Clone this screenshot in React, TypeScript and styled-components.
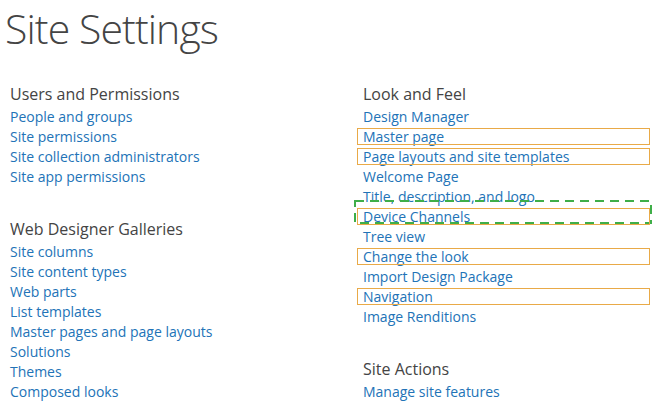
import React from "react";
import styled, { createGlobalStyle, css } from "styled-components";

const GlobalStyle = createGlobalStyle`
  html, body {
    margin: 0;
    padding: 0;
    background: #ffffff;
  }
  body {
    font-family: "Open Sans", "Noto Sans", sans-serif;
    overflow: hidden;
  }
`;

const Page = styled.div`
  width: 652px;
  height: 406px;
  box-sizing: border-box;
  padding: 0 0 0 5px;
  overflow: hidden;
`;

const Title = styled.h1`
  margin: 0;
  height: 83px;
  font-size: 41px;
  font-weight: 300;
  line-height: 56px;
  color: #444444;
  letter-spacing: -0.9px;
`;

const Columns = styled.div`
  display: grid;
  grid-template-columns: 353px 1fr;
  padding-left: 5px;
`;

const Column = styled.div`
  display: flex;
  flex-direction: column;
`;

const Section = styled.section`
  display: flex;
  flex-direction: column;
  margin-bottom: 32px;
`;

const Heading = styled.h2`
  margin: 0 0 1px;
  height: 22px;
  line-height: 22px;
  font-size: 16px;
  font-weight: 400;
  color: #444444;
`;

const Row = styled.div<{ $boxed?: boolean }>`
  position: relative;
  height: 20px;
  display: flex;
  align-items: center;
  width: 287px;
  ${(p) =>
    p.$boxed &&
    css`
      &::after {
        content: "";
        position: absolute;
        left: -6px;
        right: 0;
        top: 2px;
        bottom: 1px;
        border: 1px solid #e9aa48;
        pointer-events: none;
      }
    `}
`;

const Link = styled.a`
  font-size: 14px;
  color: #2273b7;
  text-decoration: none;
  white-space: nowrap;
  cursor: pointer;
`;

const Dashed = styled.svg`
  position: absolute;
  left: -9px;
  top: -6px;
  width: 298px;
  height: 25px;
  overflow: visible;
  pointer-events: none;
`;

type Item = { label: string; boxed?: boolean; dashed?: boolean };
type Group = { title: string; items: Item[] };

const left: Group[] = [
  {
    title: "Users and Permissions",
    items: [
      { label: "People and groups" },
      { label: "Site permissions" },
      { label: "Site collection administrators" },
      { label: "Site app permissions" },
    ],
  },
  {
    title: "Web Designer Galleries",
    items: [
      { label: "Site columns" },
      { label: "Site content types" },
      { label: "Web parts" },
      { label: "List templates" },
      { label: "Master pages and page layouts" },
      { label: "Solutions" },
      { label: "Themes" },
      { label: "Composed looks" },
    ],
  },
];

const right: Group[] = [
  {
    title: "Look and Feel",
    items: [
      { label: "Design Manager" },
      { label: "Master page", boxed: true },
      { label: "Page layouts and site templates", boxed: true },
      { label: "Welcome Page" },
      { label: "Title, description, and logo" },
      { label: "Device Channels", boxed: true, dashed: true },
      { label: "Tree view" },
      { label: "Change the look", boxed: true },
      { label: "Import Design Package" },
      { label: "Navigation", boxed: true },
      { label: "Image Renditions" },
    ],
  },
  {
    title: "Site Actions",
    items: [{ label: "Manage site features" }],
  },
];

function Groups({ groups }: { groups: Group[] }) {
  return (
    <Column>
      {groups.map((g) => (
        <Section key={g.title}>
          <Heading>{g.title}</Heading>
          {g.items.map((it) => (
            <Row key={it.label} $boxed={it.boxed}>
              <Link>{it.label}</Link>
              {it.dashed && (
                <Dashed viewBox="0 0 298 25">
                  <rect
                    x="1"
                    y="1"
                    width="296"
                    height="22"
                    fill="none"
                    stroke="#3fae49"
                    strokeWidth="2"
                    strokeDasharray="9 6"
                  />
                </Dashed>
              )}
            </Row>
          ))}
        </Section>
      ))}
    </Column>
  );
}

export default function App() {
  return (
    <Page>
      <GlobalStyle />
      <Title>Site Settings</Title>
      <Columns>
        <Groups groups={left} />
        <Groups groups={right} />
      </Columns>
    </Page>
  );
}
